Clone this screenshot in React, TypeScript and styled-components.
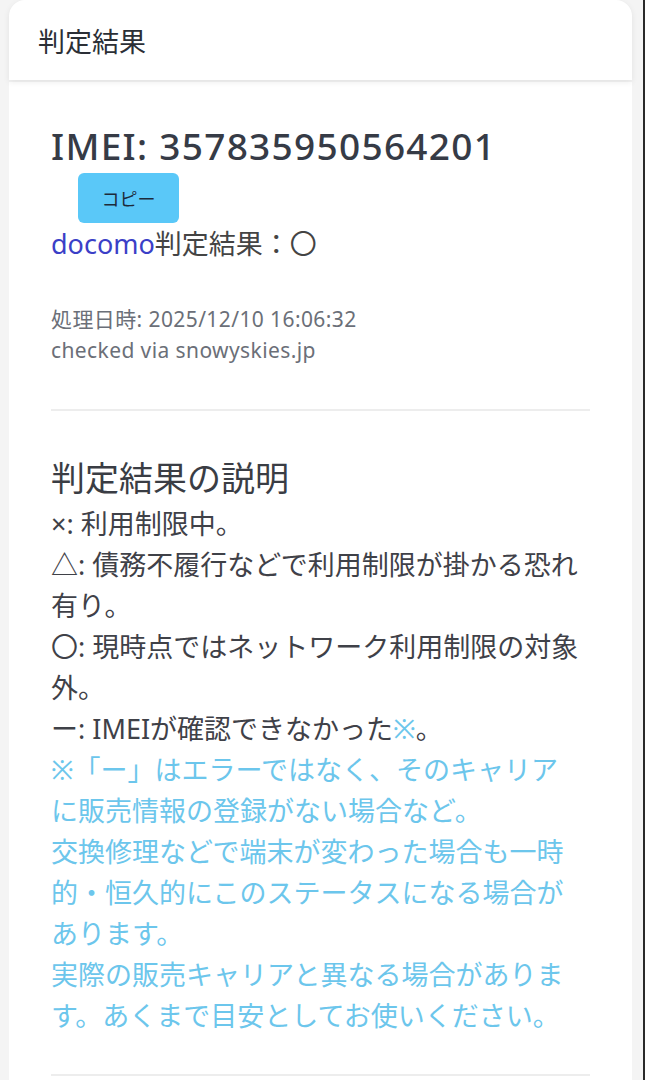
import React from "react";
import styled, { createGlobalStyle } from "styled-components";

const Global = createGlobalStyle`
  html, body {
    margin: 0;
    padding: 0;
    background: #f4f4f4;
    font-family: "Noto Sans", "Noto Sans CJK JP", sans-serif;
  }
  body {
    border-right: 2px solid #2a2a2a;
  }
`;

const Card = styled.div`
  margin: 0 11px 0 9px;
  display: flex;
  flex-direction: column;
  gap: 2px;
`;

const Header = styled.div`
  height: 80px;
  background: #fff;
  border-radius: 16px 16px 0 0;
  box-shadow: 0 2px 6px rgba(0, 0, 0, 0.08);
  display: flex;
  align-items: center;
  padding-left: 29px;
  font-size: 27px;
  color: #2b2f36;
  position: relative;
  z-index: 1;
`;

const Body = styled.div`
  background: #fff;
  padding: 45px 50px 0 42px;
  min-height: 1000px;
`;

const Imei = styled.h2`
  margin: 0;
  font-size: 37px;
  font-weight: 500;
  line-height: 38px;
  color: #363b46;
  letter-spacing: 1.3px;
  white-space: nowrap;
`;

const CopyButton = styled.button`
  display: block;
  margin: 8px 0 0 27px;
  width: 101px;
  height: 50px;
  padding: 0;
  border: none;
  border-radius: 6px;
  background: #5ac8f8;
  color: #1d2a3a;
  font-family: "Noto Sans CJK JP", sans-serif;
  font-size: 18px;
`;

const ResultLine = styled.div`
  margin-top: 4px;
  font-size: 27px;
  line-height: 34px;
  color: #444;
`;

const Carrier = styled.span`
  color: #3b3fc7;
`;

const Meta = styled.div`
  margin-top: 43px;
  font-size: 21px;
  line-height: 31px;
  color: #6b6f78;
  letter-spacing: 0.4px;
`;

const Divider = styled.hr<{ $gap: number }>`
  border: none;
  height: 2px;
  background: #ededed;
  margin: ${(p) => p.$gap}px -8px 0 0;
`;

const SectionTitle = styled.h3`
  margin: 42px 0 0 0;
  font-size: 34px;
  font-weight: 400;
  line-height: 50px;
  color: #3a3d44;
`;

const Para = styled.p<{ $note?: boolean }>`
  margin: 0;
  font-size: 27px;
  line-height: 41px;
  color: ${(p) => (p.$note ? "#6cc6ec" : "#3f4148")};
`;

const Mark = styled.span`
  color: #6cc6ec;
`;

export default function App() {
  return (
    <>
      <Global />
      <Card>
        <Header>判定結果</Header>
        <Body>
          <Imei>IMEI: 357835950564201</Imei>
          <CopyButton>コピー</CopyButton>
          <ResultLine>
            <Carrier>docomo</Carrier>判定結果：〇
          </ResultLine>
          <Meta>
            処理日時: 2025/12/10 16:06:32
            <br />
            checked via snowyskies.jp
          </Meta>
          <Divider $gap={43} />
          <SectionTitle>判定結果の説明</SectionTitle>
          <Para>×: 利用制限中。</Para>
          <Para>△: 債務不履行などで利用制限が掛かる恐れ有り。</Para>
          <Para>〇: 現時点ではネットワーク利用制限の対象外。</Para>
          <Para>
            ー: IMEIが確認できなかった<Mark>※</Mark>。
          </Para>
          <Para $note>
            ※「ー」はエラーではなく、そのキャリアに販売情報の登録がない場合など。
          </Para>
          <Para $note>
            交換修理などで端末が変わった場合も一時的・恒久的にこのステータスになる場合があります。
          </Para>
          <Para $note>
            実際の販売キャリアと異なる場合があります。あくまで目安としてお使いください。
          </Para>
          <Divider $gap={38} />
        </Body>
      </Card>
    </>
  );
}
